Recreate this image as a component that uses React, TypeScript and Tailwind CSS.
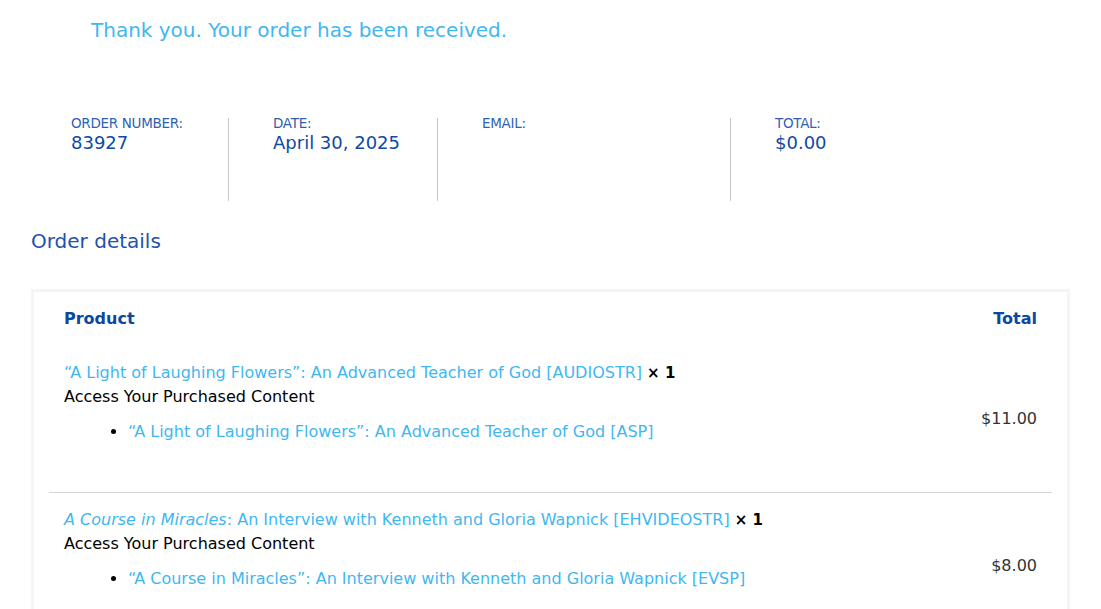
import React from 'react';

const OVERVIEW = [
  { label: 'Order number:', value: '83927', width: 'w-[158px]', first: true },
  { label: 'Date:', value: 'April 30, 2025', width: 'w-[209px]' },
  { label: 'Email:', value: '', width: 'w-[293px]' },
  { label: 'Total:', value: '$0.00', width: 'w-auto', last: true },
];

const ITEMS = [
  {
    title: (
      <>“A Light of Laughing Flowers”: An Advanced Teacher of God [AUDIOSTR]</>
    ),
    content: '“A Light of Laughing Flowers”: An Advanced Teacher of God [ASP]',
    total: '$11.00',
  },
  {
    title: (
      <>
        <em>A Course in Miracles</em>: An Interview with Kenneth and Gloria Wapnick [EHVIDEOSTR]
      </>
    ),
    content: '“A Course in Miracles”: An Interview with Kenneth and Gloria Wapnick [EVSP]',
    total: '$8.00',
  },
];

export default function App() {
  return (
    <main
      className="min-h-screen bg-white px-[31px] text-[#333]"
      style={{ fontFamily: '"DejaVu Sans", "Liberation Sans", sans-serif' }}
    >
      <p className="pl-[60px] pt-[17px] text-[20px] leading-[26px] text-[#3fb7f0]">
        Thank you. Your order has been received.
      </p>

      <ul className="mt-[75px] flex pl-[40px]">
        {OVERVIEW.map(({ label, value, width, first, last }) => (
          <li
            key={label}
            className={`${width} h-[83px] ${last ? '' : 'border-r border-[#c8c8c8]'} ${first ? '' : 'pl-[44px]'}`}
          >
            <div className="text-[13.5px] uppercase leading-[11px] tracking-[-0.3px] text-[#2f5fb3]">{label}</div>
            <div className="mt-[2px] text-[18px] leading-[24px] text-[#0e4aa3]">{value}</div>
          </li>
        ))}
      </ul>

      <h2 className="mt-[27px] text-[20px] leading-[26px] text-[#1f52ac]">Order details</h2>

      <section className="mt-[35px] border-[3px] border-b-0 border-[#f5f5f5] px-[15px]">
        <div className="flex items-center justify-between px-[15px] pb-[15px] pt-[15px] text-[16px] font-bold leading-[24px] text-[#0c47a0]">
          <span>Product</span>
          <span>Total</span>
        </div>
        {ITEMS.map((item, i) => (
          <div
            key={item.total}
            className={`flex items-center justify-between px-[15px] pt-[15px] ${i > 0 ? 'border-t border-[#d6d6d6]' : ''}`}
          >
            <div className="text-[16px] leading-[24px]">
              <div>
                <a className="text-[#3fb7f0]">{item.title}</a>{' '}
                <strong className="text-[15px] font-bold text-black">× 1</strong>
              </div>
              <div className="font-medium text-black">Access Your Purchased Content</div>
              <ul className="mb-[48px] mt-[11px] list-disc pl-[64px] marker:text-black">
                <li>
                  <a className="text-[#3fb7f0]">{item.content}</a>
                </li>
              </ul>
            </div>
            <div className="pb-[15px] text-[16px] leading-[24px] text-[#333]">{item.total}</div>
          </div>
        ))}
      </section>
    </main>
  );
}
